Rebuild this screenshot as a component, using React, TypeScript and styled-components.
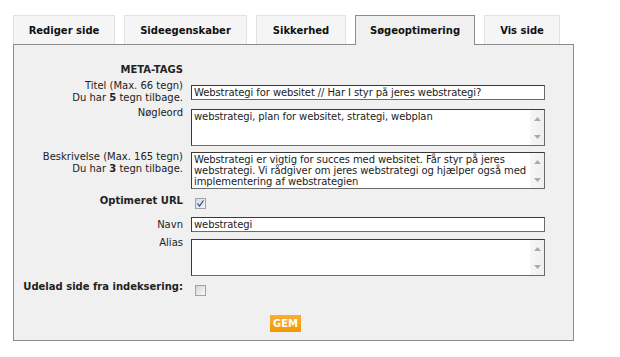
import React from 'react';
import styled, { createGlobalStyle } from 'styled-components';

const GlobalStyle = createGlobalStyle`
  body {
    margin: 0;
    background: #fff;
    font-family: "DejaVu Sans", Verdana, sans-serif;
  }
`;

const Page = styled.div`
  padding: 15px 0 0 13px;
  width: 561px;
`;

const TabBar = styled.div`
  display: flex;
  gap: 9px;
  height: 29px;
  position: relative;
  z-index: 1;
`;

const Tab = styled.div<{ $active?: boolean; $w: number }>`
  box-sizing: border-box;
  width: ${p => p.$w}px;
  height: ${p => (p.$active ? 30 : 29)}px;
  display: flex;
  align-items: center;
  justify-content: center;
  padding-bottom: ${p => (p.$active ? 1 : 0)}px;
  font-size: 10px;
  font-weight: bold;
  color: #111;
  background: ${p => (p.$active ? '#f0f0f0' : '#f5f5f5')};
  border: 1px solid ${p => (p.$active ? '#8c8c8c' : '#e2e2e2')};
  border-bottom: none;
`;

const Panel = styled.div`
  box-sizing: border-box;
  width: 561px;
  height: 297px;
  border: 1px solid #8c8c8c;
  background: #f0f0f0;
  padding-top: 19px;
`;

const Row = styled.div<{ $top: number; $align?: string }>`
  display: grid;
  grid-template-columns: 169px 354px;
  column-gap: 8px;
  align-items: ${p => p.$align || 'start'};
  margin-top: ${p => p.$top}px;
`;

const Label = styled.div<{ $bold?: boolean }>`
  text-align: right;
  font-size: 10px;
  line-height: 12px;
  color: #222;
  font-weight: ${p => (p.$bold ? 'bold' : 'normal')};
  white-space: nowrap;
`;

const TextInput = styled.input`
  box-sizing: border-box;
  width: 354px;
  height: 15px;
  margin: 0;
  padding: 0 2px;
  border: 1px solid #3a3a3a;
  border-right-color: #6a6a6a;
  border-bottom-color: #6a6a6a;
  background: #fff;
  font-family: inherit;
  font-size: 10px;
  line-height: 12px;
  letter-spacing: -0.1px;
  color: #222;
  outline: none;
`;

const AreaBox = styled.div<{ $offset?: number }>`
  box-sizing: border-box;
  display: flex;
  width: 354px;
  height: 37px;
  margin-top: ${p => p.$offset ?? 2}px;
  border: 1px solid #3a3a3a;
  border-right-color: #6a6a6a;
  border-bottom-color: #6a6a6a;
  background: #fff;
`;

const Area = styled.textarea`
  flex: 1;
  margin: 0;
  border: none;
  padding: 1px 1px 0 2px;
  resize: none;
  overflow: hidden;
  font-family: inherit;
  font-size: 10px;
  line-height: 11px;
  letter-spacing: -0.1px;
  color: #222;
  background: transparent;
  outline: none;
`;

const ScrollCol = styled.div`
  width: 14px;
  display: flex;
  flex-direction: column;
  justify-content: space-between;
  align-items: center;
  padding: 7px 0 6px;
  background: linear-gradient(90deg, #f7f7f7, #efefef);
`;

const Check = styled.div<{ $checked?: boolean }>`
  box-sizing: border-box;
  width: 11px;
  height: 11px;
  margin-left: 4px;
  border: 1px solid #a3a3a3;
  background: ${p =>
    p.$checked
      ? 'linear-gradient(135deg, #d4d8e0, #f4f5f8)'
      : 'linear-gradient(135deg, #d6d6d6, #fafafa)'};
  display: flex;
  align-items: center;
  justify-content: center;
`;

const ButtonRow = styled.div`
  margin-top: 16px;
  padding-left: 256px;
`;

const SaveButton = styled.button`
  box-sizing: border-box;
  width: 31px;
  height: 17px;
  padding: 0;
  border: none;
  background: linear-gradient(#fbae35, #f49700);
  color: #fff;
  font-family: inherit;
  font-size: 10px;
  font-weight: bold;
`;

const Arrow = ({ up }: { up?: boolean }) => (
  <svg width="7" height="4" viewBox="0 0 7 4">
    <path d={up ? 'M0 4 L3.5 0 L7 4 Z' : 'M0 0 L3.5 4 L7 0 Z'} fill="#aaaaaa" />
  </svg>
);

const TextArea = ({ value, offset }: { value: string; offset?: number }) => (
  <AreaBox $offset={offset}>
    <Area defaultValue={value} />
    <ScrollCol>
      <Arrow up />
      <Arrow />
    </ScrollCol>
  </AreaBox>
);

const CheckBox = ({ checked }: { checked?: boolean }) => (
  <Check $checked={checked}>
    {checked && (
      <svg width="7" height="7" viewBox="0 0 7 7">
        <path d="M0.5 3.5 L2.5 6 L6.5 0.5" fill="none" stroke="#2a3f8f" strokeWidth="1.2" />
      </svg>
    )}
  </Check>
);

const tabs = [
  { label: 'Rediger side', w: 102 },
  { label: 'Sideegenskaber', w: 123 },
  { label: 'Sikkerhed', w: 90 },
  { label: 'Søgeoptimering', w: 120, active: true },
  { label: 'Vis side', w: 76 },
];

export default function App() {
  return (
    <Page>
      <GlobalStyle />
      <TabBar>
        {tabs.map(t => (
          <Tab key={t.label} $w={t.w} $active={t.active}>
            {t.label}
          </Tab>
        ))}
      </TabBar>
      <Panel>
        <Row $top={0}>
          <Label $bold>META-TAGS</Label>
        </Row>
        <Row $top={4} $align="center">
          <Label>
            Titel (Max. 66 tegn)
            <br />
            Du har <b>5</b> tegn tilbage.
          </Label>
          <TextInput defaultValue="Webstrategi for websitet // Har I styr på jeres webstrategi?" />
        </Row>
        <Row $top={3}>
          <Label>Nøgleord</Label>
          <TextArea value="webstrategi, plan for websitet, strategi, webplan" />
        </Row>
        <Row $top={5}>
          <Label>
            Beskrivelse (Max. 165 tegn)
            <br />
            Du har <b>3</b> tegn tilbage.
          </Label>
          <TextArea value="Webstrategi er vigtig for succes med websitet. Får styr på jeres webstrategi. Vi rådgiver om jeres webstrategi og hjælper også med implementering af webstrategien" offset={1} />
        </Row>
        <Row $top={6}>
          <Label $bold>Optimeret URL</Label>
          <div style={{ paddingTop: 3 }}>
            <CheckBox checked />
          </div>
        </Row>
        <Row $top={8} $align="center">
          <Label>Navn</Label>
          <TextInput defaultValue="webstrategi" />
        </Row>
        <Row $top={5}>
          <Label>Alias</Label>
          <TextArea value="" />
        </Row>
        <Row $top={5}>
          <Label $bold>Udelad side fra indeksering:</Label>
          <div style={{ paddingTop: 4 }}>
            <CheckBox />
          </div>
        </Row>
        <ButtonRow>
          <SaveButton>GEM</SaveButton>
        </ButtonRow>
      </Panel>
    </Page>
  );
}
